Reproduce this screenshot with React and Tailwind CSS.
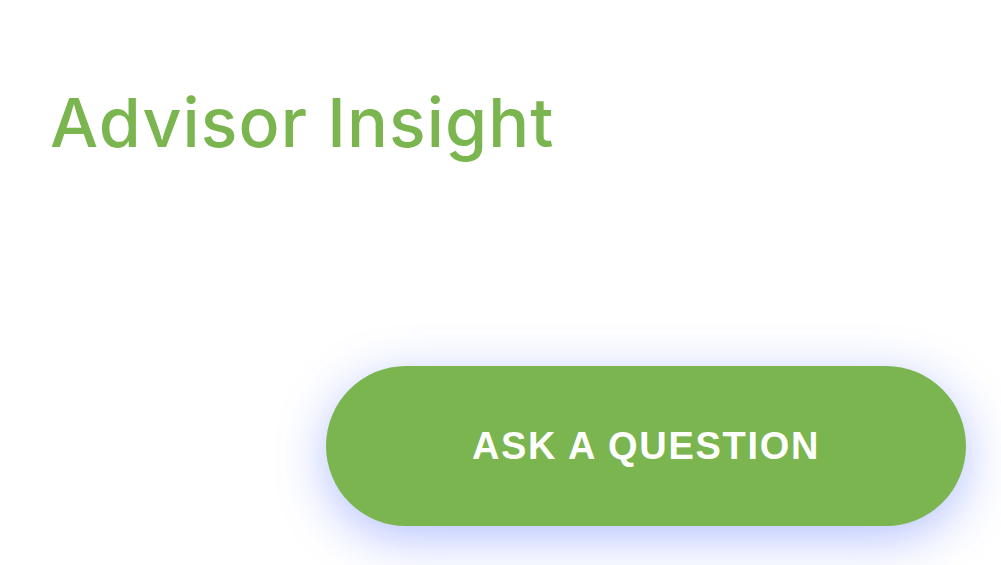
const App = () => {
    return (
        <div className="w-[1001px] h-[565px] bg-white flex flex-col overflow-hidden">

            {/* TITLE */}
            <div className="pl-[50px] pt-[82px]">
                <h1 className="text-[68px] leading-[80px] font-medium tracking-[1.1px] text-[#7ab54f] font-['Inter',sans-serif]">
                    Advisor Insight
                </h1>
            </div>

            {/* BUTTON */}
            <div className="flex justify-end pr-[35px] mt-[204px]">
                <button className="w-[640px] h-[160px] rounded-full bg-[#7ab54f] text-white text-[38px] font-bold tracking-[1.7px] font-['Liberation_Sans',Arial,sans-serif] shadow-[0_12px_50px_rgba(80,110,255,0.42)]">
                    ASK A QUESTION
                </button>
            </div>
        </div>
    );
};

export default App;
